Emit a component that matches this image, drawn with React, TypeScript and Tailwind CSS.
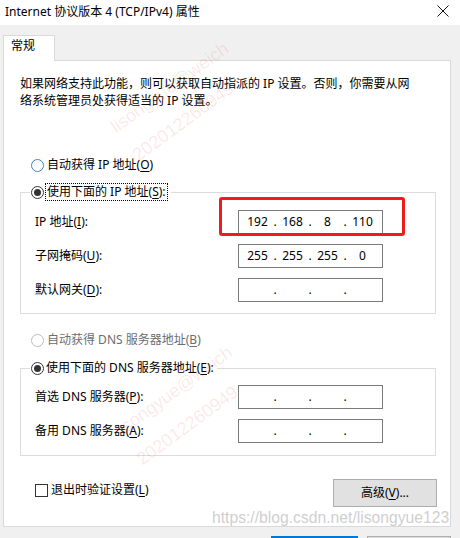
import React from "react";

const U = ({ c }: { c: string }) => (
  <span className="underline decoration-1 underline-offset-[2px]">{c}</span>
);

function Radio({ state }: { state: "off" | "on" | "dis" }) {
  if (state === "on")
    return (
      <span className="w-[13px] h-[13px] rounded-full border border-[#333333] bg-white flex items-center justify-center shrink-0">
        <span className="w-[7px] h-[7px] rounded-full bg-[#333333]" />
      </span>
    );
  if (state === "dis")
    return <span className="w-[13px] h-[13px] rounded-full border border-[#bcbcbc] bg-white shrink-0" />;
  return <span className="w-[13px] h-[13px] rounded-full border border-[#3f83c6] bg-white shrink-0" />;
}

function IpBox({ v }: { v?: string[] }) {
  const o = v ?? ["", "", "", ""];
  return (
    <div className="w-[145px] h-[24px] border border-[#7a7a7a] bg-white flex items-center pl-[5px] leading-[16px]">
      {o.map((x, i) => (
        <React.Fragment key={i}>
          <span className="w-[27px] text-center">{x}</span>
          {i < 3 && <span className="w-[8px] text-center">.</span>}
        </React.Fragment>
      ))}
    </div>
  );
}

function Watermark({ x, y }: { x: number; y: number }) {
  return (
    <>
      <div
        className="absolute pointer-events-none whitespace-nowrap origin-bottom-left rotate-[-36deg] text-[18px] leading-[18px] text-[rgba(235,70,70,0.13)] [font-family:'Liberation_Sans',sans-serif]"
        style={{ left: x, top: y - 18 }}
      >
        lisongyue@weich
      </div>
      <div
        className="absolute pointer-events-none whitespace-nowrap origin-bottom-left rotate-[-36deg] text-[18px] leading-[18px] text-[rgba(235,70,70,0.13)] [font-family:'Liberation_Sans',sans-serif]"
        style={{ left: x + 22, top: y + 28 - 18 }}
      >
        202012260949
      </div>
    </>
  );
}

export default function App() {
  return (
    <div className="relative w-[460px] h-[538px] overflow-hidden bg-[#f0f0f0] text-black text-[12px] [font-family:'Noto_Sans','Noto_Sans_CJK_SC',sans-serif]">
      {/* Title bar */}
      <div className="h-[25px] bg-white flex items-center justify-between pl-[5px] pr-[11px]">
        <span className="leading-[16px] -mt-[2px]">Internet 协议版本 4 (TCP/IPv4) 属性</span>
        <svg width="12" height="12" viewBox="0 0 12 12" className="-mt-[3px]">
          <path d="M0.5 0.5L11.5 11.5M11.5 0.5L0.5 11.5" stroke="#111" strokeWidth="1" />
        </svg>
      </div>

      <div className="pt-[10px] px-[3px]">
        {/* Tab */}
        <div className="relative z-10 w-[52px] h-[26px] bg-white border border-[#d9d9d9] border-b-0 -mb-[1px] pl-[7px] pt-[2px] leading-[16px]">
          常规
        </div>
        {/* Panel */}
        <div className="w-[448px] h-[467px] bg-white border border-[#d9d9d9] flex flex-col">
          <p className="pt-[14px] pl-[16px] leading-[17px]">
            如果网络支持此功能，则可以获取自动指派的 IP 设置。否则，你需要从网
            <br />
            络系统管理员处获得适当的 IP 设置。
          </p>

          <div className="mt-[48px] ml-[27px] h-[16px] flex items-center gap-[3px] leading-[16px]">
            <Radio state="off" />
            <span>
              自动获得 IP 地址(<U c="O" />)
            </span>
          </div>

          <fieldset className="mt-[10px] ml-[16px] w-[416px] border border-[#dcdcdc] px-[9px] pb-[11px]">
            <legend className="pl-[1px] pr-[3px] h-[18px] flex items-center">
              <Radio state="on" />
              <span className="ml-[1px] h-[18px] border border-dotted border-black px-[1px] leading-[16px]">
                使用下面的 IP 地址(<U c="S" />):
              </span>
            </legend>
            <div className="pt-[9px] grid grid-cols-[208px_145px] gap-y-[10px] items-center leading-[16px]">
              <span className="pl-[5px]">
                IP 地址(<U c="I" />):
              </span>
              <IpBox v={["192", "168", "8", "110"]} />
              <span className="pl-[5px]">
                子网掩码(<U c="U" />):
              </span>
              <IpBox v={["255", "255", "255", "0"]} />
              <span className="pl-[5px]">
                默认网关(<U c="D" />):
              </span>
              <IpBox />
            </div>
          </fieldset>

          <div className="mt-[18px] ml-[27px] h-[16px] flex items-center gap-[3px] leading-[16px] text-[#6d6d6d]">
            <Radio state="dis" />
            <span>
              自动获得 DNS 服务器地址(<U c="B" />)
            </span>
          </div>

          <fieldset className="mt-[11px] ml-[16px] w-[416px] border border-[#dcdcdc] px-[9px] pb-[12px]">
            <legend className="pl-[1px] pr-[3px] h-[18px] flex items-center">
              <Radio state="on" />
              <span className="ml-[2px] leading-[16px]">
                使用下面的 DNS 服务器地址(<U c="E" />):
              </span>
            </legend>
            <div className="pt-[8px] grid grid-cols-[208px_145px] gap-y-[10px] items-center leading-[16px]">
              <span className="pl-[5px]">
                首选 DNS 服务器(<U c="P" />):
              </span>
              <IpBox />
              <span className="pl-[5px]">
                备用 DNS 服务器(<U c="A" />):
              </span>
              <IpBox />
            </div>
          </fieldset>

          <div className="mt-[23px] flex items-start">
            <div className="ml-[31px] mt-[3px] flex items-center gap-[3px] leading-[16px]">
              <span className="w-[13px] h-[13px] border border-[#333333] bg-white shrink-0" />
              <span>
                退出时验证设置(<U c="L" />)
              </span>
            </div>
            <button className="ml-auto mr-[13px] w-[104px] h-[28px] bg-[#e1e1e1] border border-[#adadad] flex items-center justify-center leading-[16px]">
              高级(<U c="V" />)...
            </button>
          </div>
        </div>

        {/* Bottom dialog buttons (cut off) */}
        <div className="mt-[9px] flex justify-end gap-[9px] pr-[6px]">
          <div className="w-[87px] h-[23px] bg-[#e1e1e1] border-2 border-[#0078d7]" />
          <div className="w-[84px] h-[23px] bg-[#e1e1e1] border border-[#adadad]" />
        </div>
      </div>

      {/* Annotation: red highlight */}
      <div className="absolute left-[219px] top-[197px] w-[186px] h-[39px] border-[3px] border-[#ee1c1c] rounded-[3px]" />

      {/* Watermarks */}
      <Watermark x={118} y={136} />
      <Watermark x={122} y={440} />
      <div className="absolute left-[212px] top-[509px] text-[15.7px] leading-[18px] whitespace-nowrap text-[#cfcfcf] [font-family:'Liberation_Sans',sans-serif] [text-shadow:0_0_1px_#ffffff]">
        https://blog.csdn.net/lisongyue123
      </div>
    </div>
  );
}
